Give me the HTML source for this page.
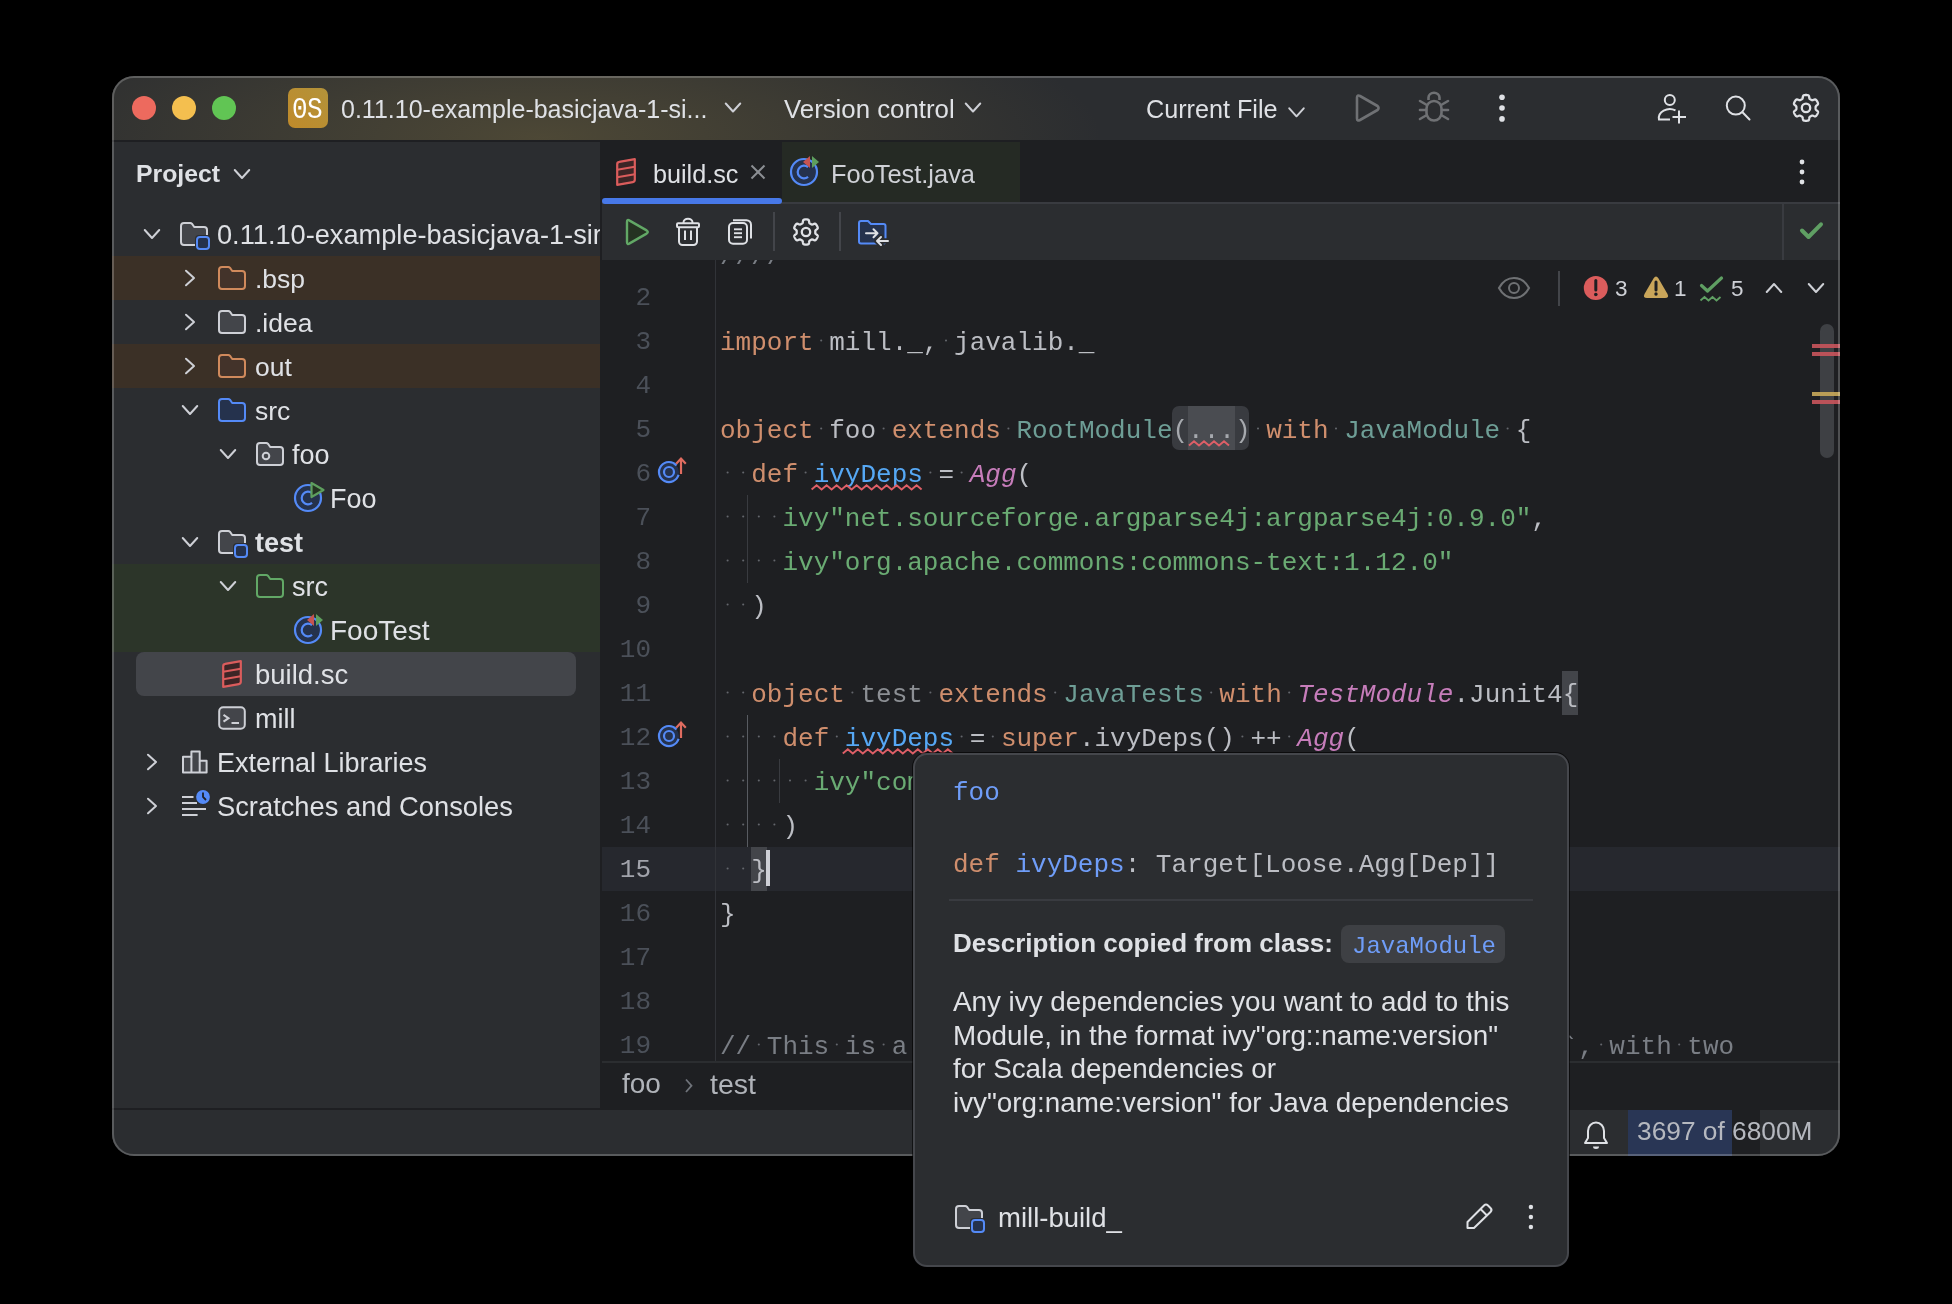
<!DOCTYPE html>
<html><head><meta charset="utf-8"><style>
html,body{margin:0;padding:0;background:#000;width:1952px;height:1304px;overflow:hidden;}
</style></head><body>
<div id="win" style="position:absolute;left:0;top:0;width:1952px;height:1304px;clip-path:inset(76px 112px 148px 112px round 22px);">
<div style="position:absolute;left:112px;top:76px;width:1728px;height:1080px;background:#2b2d30"></div>
<div style="position:absolute;left:112px;top:76px;width:1728px;height:64px;background:radial-gradient(ellipse 560px 150px at 430px 62px, rgba(128,112,62,0.40), rgba(128,112,62,0) 100%),#2b2d30"></div>
<div style="position:absolute;left:112px;top:140px;width:1728px;height:2px;background:#1e1f22"></div>
<div style="position:absolute;left:288px;top:88px;width:40px;height:40px;border-radius:7px;background:linear-gradient(45deg,#c08a2a,#b3933a)"></div>
<div style="position:absolute;will-change:transform;left:292px;top:97.17px;white-space:pre;font-family:'Liberation Mono', monospace;font-size:26px;line-height:31px;color:#ffffff;font-weight:normal;font-style:normal;letter-spacing:-0.6px;transform:scale(1,1.1);transform-origin:0 88%">0S</div>
<div style="position:absolute;will-change:transform;left:341px;top:94.34px;white-space:pre;font-family:'Liberation Sans', sans-serif;font-size:25px;line-height:30px;color:#dfe1e5;font-weight:normal;font-style:normal;">0.11.10-example-basicjava-1-si...</div>
<div style="position:absolute;will-change:transform;left:784px;top:93.56px;white-space:pre;font-family:'Liberation Sans', sans-serif;font-size:25.8px;line-height:31px;color:#dfe1e5;font-weight:normal;font-style:normal;">Version control</div>
<div style="position:absolute;will-change:transform;left:1146px;top:94.27px;white-space:pre;font-family:'Liberation Sans', sans-serif;font-size:25.2px;line-height:30px;color:#dfe1e5;font-weight:normal;font-style:normal;">Current File</div>
<div style="position:absolute;will-change:transform;left:136px;top:158.71px;white-space:pre;font-family:'Liberation Sans', sans-serif;font-size:24.8px;line-height:30px;color:#dfe1e5;font-weight:bold;font-style:normal;">Project</div>
<div style="position:absolute;left:112px;top:256px;width:488px;height:44px;background:#3b3026"></div>
<div style="position:absolute;left:112px;top:344px;width:488px;height:44px;background:#3b3026"></div>
<div style="position:absolute;left:112px;top:564px;width:488px;height:88px;background:#2c3529"></div>
<div style="position:absolute;left:136px;top:652px;width:440px;height:44px;border-radius:8px;background:#43454a"></div>
<div style="position:absolute;will-change:transform;left:217px;top:218.48px;white-space:pre;font-family:'Liberation Sans', sans-serif;font-size:27.2px;line-height:33px;color:#dfe1e5;font-weight:normal;font-style:normal;width:382.5px;overflow:hidden">0.11.10-example-basicjava-1-simple</div>
<div style="position:absolute;will-change:transform;left:255px;top:263.22px;white-space:pre;font-family:'Liberation Sans', sans-serif;font-size:26.5px;line-height:32px;color:#dfe1e5;font-weight:normal;font-style:normal;">.bsp</div>
<div style="position:absolute;will-change:transform;left:255px;top:307.22px;white-space:pre;font-family:'Liberation Sans', sans-serif;font-size:26.5px;line-height:32px;color:#dfe1e5;font-weight:normal;font-style:normal;">.idea</div>
<div style="position:absolute;will-change:transform;left:255px;top:351.22px;white-space:pre;font-family:'Liberation Sans', sans-serif;font-size:26.5px;line-height:32px;color:#dfe1e5;font-weight:normal;font-style:normal;">out</div>
<div style="position:absolute;will-change:transform;left:255px;top:395.22px;white-space:pre;font-family:'Liberation Sans', sans-serif;font-size:26.5px;line-height:32px;color:#dfe1e5;font-weight:normal;font-style:normal;">src</div>
<div style="position:absolute;will-change:transform;left:292px;top:439.04px;white-space:pre;font-family:'Liberation Sans', sans-serif;font-size:27px;line-height:32px;color:#dfe1e5;font-weight:normal;font-style:normal;">foo</div>
<div style="position:absolute;will-change:transform;left:330px;top:483.04px;white-space:pre;font-family:'Liberation Sans', sans-serif;font-size:27px;line-height:32px;color:#dfe1e5;font-weight:normal;font-style:normal;">Foo</div>
<div style="position:absolute;will-change:transform;left:255px;top:527.04px;white-space:pre;font-family:'Liberation Sans', sans-serif;font-size:27px;line-height:32px;color:#dfe1e5;font-weight:bold;font-style:normal;">test</div>
<div style="position:absolute;will-change:transform;left:292px;top:571.04px;white-space:pre;font-family:'Liberation Sans', sans-serif;font-size:27px;line-height:32px;color:#dfe1e5;font-weight:normal;font-style:normal;">src</div>
<div style="position:absolute;will-change:transform;left:330px;top:613.70px;white-space:pre;font-family:'Liberation Sans', sans-serif;font-size:28px;line-height:34px;color:#dfe1e5;font-weight:normal;font-style:normal;">FooTest</div>
<div style="position:absolute;will-change:transform;left:255px;top:658.37px;white-space:pre;font-family:'Liberation Sans', sans-serif;font-size:27.5px;line-height:33px;color:#dfe1e5;font-weight:normal;font-style:normal;">build.sc</div>
<div style="position:absolute;will-change:transform;left:255px;top:703.04px;white-space:pre;font-family:'Liberation Sans', sans-serif;font-size:27px;line-height:32px;color:#dfe1e5;font-weight:normal;font-style:normal;">mill</div>
<div style="position:absolute;will-change:transform;left:217px;top:747.04px;white-space:pre;font-family:'Liberation Sans', sans-serif;font-size:27px;line-height:32px;color:#dfe1e5;font-weight:normal;font-style:normal;">External Libraries</div>
<div style="position:absolute;will-change:transform;left:217px;top:790.44px;white-space:pre;font-family:'Liberation Sans', sans-serif;font-size:27.3px;line-height:33px;color:#dfe1e5;font-weight:normal;font-style:normal;">Scratches and Consoles</div>
<div style="position:absolute;left:600px;top:142px;width:2px;height:966px;background:#1e1f22"></div>
<div style="position:absolute;left:602px;top:142px;width:1238px;height:60px;background:#1e1f22"></div>
<div style="position:absolute;left:782px;top:142px;width:238px;height:60px;background:#252a24"></div>
<div style="position:absolute;left:602px;top:202px;width:1238px;height:2px;background:#393b40"></div>
<div style="position:absolute;left:602px;top:198px;width:180px;height:6px;border-radius:3px;background:#4778e8"></div>
<div style="position:absolute;will-change:transform;left:653px;top:158.57px;white-space:pre;font-family:'Liberation Sans', sans-serif;font-size:25.2px;line-height:30px;color:#dfe1e5;font-weight:normal;font-style:normal;">build.sc</div>
<div style="position:absolute;will-change:transform;left:831px;top:158.50px;white-space:pre;font-family:'Liberation Sans', sans-serif;font-size:25.4px;line-height:30px;color:#cfd1d6;font-weight:normal;font-style:normal;">FooTest.java</div>
<div style="position:absolute;left:602px;top:204px;width:1238px;height:56px;background:#2b2d30"></div>
<div style="position:absolute;left:1782px;top:204px;width:2px;height:56px;background:#393b40"></div>
<div style="position:absolute;left:773px;top:212px;width:2px;height:39px;background:#43454a"></div>
<div style="position:absolute;left:839px;top:212px;width:2px;height:39px;background:#43454a"></div>
<div style="position:absolute;left:602px;top:260px;width:1238px;height:802px;background:#1e1f22"></div>
<div style="position:absolute;left:602px;top:847px;width:1238px;height:44px;background:#26282e"></div>
<div style="position:absolute;left:714.5px;top:260px;width:1.6px;height:802px;background:#313338"></div>
<div style="position:absolute;left:746.5px;top:495px;width:1.6px;height:88px;background:#393b40"></div>
<div style="position:absolute;left:746.5px;top:715px;width:1.8px;height:132px;background:#585b61"></div>
<div style="position:absolute;left:778.5px;top:759px;width:1.6px;height:44px;background:#393b40"></div>
<div style="position:absolute;left:750.7px;top:847px;width:16px;height:44px;background:#43454a"></div>
<div style="position:absolute;left:1562.4px;top:671px;width:16px;height:44px;background:#43454a"></div>
<div style="position:absolute;left:1172.4px;top:406.3px;width:77px;height:43.5px;border-radius:7px;background:#393b40"></div>
<div style="position:absolute;left:1188.0px;top:406.3px;width:46.8px;height:43.5px;background:#4a4c51"></div>
<div style="position:absolute;left:0;top:0;width:1952px;height:1304px;clip-path:inset(260px 0 242px 0)">
<div style="position:absolute;will-change:transform;left:720px;top:242.21px;white-space:pre;font-family:'Liberation Mono', monospace;font-size:26px;line-height:31px;color:#bcbec4;font-weight:normal;font-style:normal;"><span style="color:#7a7e85;">////</span></div>
<div style="position:absolute;will-change:transform;left:720px;top:327.57px;white-space:pre;font-family:'Liberation Mono', monospace;font-size:26px;line-height:31px;color:#bcbec4;font-weight:normal;font-style:normal;"><span style="color:#cf8e6d;">import</span><span style="color:#bcbec4;"> mill._, javalib._</span></div>
<div style="position:absolute;will-change:transform;left:720px;top:415.57px;white-space:pre;font-family:'Liberation Mono', monospace;font-size:26px;line-height:31px;color:#bcbec4;font-weight:normal;font-style:normal;"><span style="color:#cf8e6d;">object</span><span style="color:#bcbec4;"> foo </span><span style="color:#cf8e6d;">extends</span><span style="color:#bcbec4;"> </span><span style="color:#6e9e96;">RootModule</span><span style="color:#a6a9ae;">(</span><span style="color:#a6a9ae;">...</span><span style="color:#a6a9ae;">)</span><span style="color:#bcbec4;"> </span><span style="color:#cf8e6d;">with</span><span style="color:#bcbec4;"> </span><span style="color:#6e9e96;">JavaModule</span><span style="color:#bcbec4;"> {</span></div>
<div style="position:absolute;will-change:transform;left:720px;top:459.57px;white-space:pre;font-family:'Liberation Mono', monospace;font-size:26px;line-height:31px;color:#bcbec4;font-weight:normal;font-style:normal;"><span style="color:#bcbec4;">  </span><span style="color:#cf8e6d;">def</span><span style="color:#bcbec4;"> </span><span style="color:#56a8f5;">ivyDeps</span><span style="color:#bcbec4;"> = </span><span style="color:#c77dbb;font-style:italic;">Agg</span><span style="color:#bcbec4;">(</span></div>
<div style="position:absolute;will-change:transform;left:720px;top:503.57px;white-space:pre;font-family:'Liberation Mono', monospace;font-size:26px;line-height:31px;color:#bcbec4;font-weight:normal;font-style:normal;"><span style="color:#bcbec4;">    </span><span style="color:#6aab73;">ivy"net.sourceforge.argparse4j:argparse4j:0.9.0"</span><span style="color:#bcbec4;">,</span></div>
<div style="position:absolute;will-change:transform;left:720px;top:547.57px;white-space:pre;font-family:'Liberation Mono', monospace;font-size:26px;line-height:31px;color:#bcbec4;font-weight:normal;font-style:normal;"><span style="color:#bcbec4;">    </span><span style="color:#6aab73;">ivy"org.apache.commons:commons-text:1.12.0"</span></div>
<div style="position:absolute;will-change:transform;left:720px;top:591.57px;white-space:pre;font-family:'Liberation Mono', monospace;font-size:26px;line-height:31px;color:#bcbec4;font-weight:normal;font-style:normal;"><span style="color:#bcbec4;">  )</span></div>
<div style="position:absolute;will-change:transform;left:720px;top:679.57px;white-space:pre;font-family:'Liberation Mono', monospace;font-size:26px;line-height:31px;color:#bcbec4;font-weight:normal;font-style:normal;"><span style="color:#bcbec4;">  </span><span style="color:#cf8e6d;">object</span><span style="color:#bcbec4;"> </span><span style="color:#8c8f94;">test</span><span style="color:#bcbec4;"> </span><span style="color:#cf8e6d;">extends</span><span style="color:#bcbec4;"> </span><span style="color:#6e9e96;">JavaTests</span><span style="color:#bcbec4;"> </span><span style="color:#cf8e6d;">with</span><span style="color:#bcbec4;"> </span><span style="color:#c77dbb;font-style:italic;">TestModule</span><span style="color:#bcbec4;">.Junit4{</span></div>
<div style="position:absolute;will-change:transform;left:720px;top:723.57px;white-space:pre;font-family:'Liberation Mono', monospace;font-size:26px;line-height:31px;color:#bcbec4;font-weight:normal;font-style:normal;"><span style="color:#bcbec4;">    </span><span style="color:#cf8e6d;">def</span><span style="color:#bcbec4;"> </span><span style="color:#56a8f5;">ivyDeps</span><span style="color:#bcbec4;"> = </span><span style="color:#cf8e6d;">super</span><span style="color:#bcbec4;">.ivyDeps() ++ </span><span style="color:#c77dbb;font-style:italic;">Agg</span><span style="color:#bcbec4;">(</span></div>
<div style="position:absolute;will-change:transform;left:720px;top:767.57px;white-space:pre;font-family:'Liberation Mono', monospace;font-size:26px;line-height:31px;color:#bcbec4;font-weight:normal;font-style:normal;"><span style="color:#bcbec4;">      </span><span style="color:#6aab73;">ivy"com.novocode:junit-interface:0.11"</span></div>
<div style="position:absolute;will-change:transform;left:720px;top:811.57px;white-space:pre;font-family:'Liberation Mono', monospace;font-size:26px;line-height:31px;color:#bcbec4;font-weight:normal;font-style:normal;"><span style="color:#bcbec4;">    )</span></div>
<div style="position:absolute;will-change:transform;left:720px;top:855.57px;white-space:pre;font-family:'Liberation Mono', monospace;font-size:26px;line-height:31px;color:#bcbec4;font-weight:normal;font-style:normal;"><span style="color:#bcbec4;">  }</span></div>
<div style="position:absolute;will-change:transform;left:720px;top:899.57px;white-space:pre;font-family:'Liberation Mono', monospace;font-size:26px;line-height:31px;color:#bcbec4;font-weight:normal;font-style:normal;"><span style="color:#bcbec4;">}</span></div>
<div style="position:absolute;will-change:transform;left:720px;top:1031.57px;white-space:pre;font-family:'Liberation Mono', monospace;font-size:26px;line-height:31px;color:#bcbec4;font-weight:normal;font-style:normal;"><span style="color:#7a7e85;">// This is a basic Mill build for a single `JavaModule`, with two</span></div>
</div>
<div style="position:absolute;left:766px;top:850px;width:4px;height:36px;background:#ced0d6"></div>
<div style="position:absolute;will-change:transform;left:580px;width:71px;text-align:right;top:284.3px;font-family:'Liberation Mono', monospace;font-size:26px;line-height:29.5px;color:#4b5059;white-space:pre">2</div>
<div style="position:absolute;will-change:transform;left:580px;width:71px;text-align:right;top:328.3px;font-family:'Liberation Mono', monospace;font-size:26px;line-height:29.5px;color:#4b5059;white-space:pre">3</div>
<div style="position:absolute;will-change:transform;left:580px;width:71px;text-align:right;top:372.3px;font-family:'Liberation Mono', monospace;font-size:26px;line-height:29.5px;color:#4b5059;white-space:pre">4</div>
<div style="position:absolute;will-change:transform;left:580px;width:71px;text-align:right;top:416.3px;font-family:'Liberation Mono', monospace;font-size:26px;line-height:29.5px;color:#4b5059;white-space:pre">5</div>
<div style="position:absolute;will-change:transform;left:580px;width:71px;text-align:right;top:460.3px;font-family:'Liberation Mono', monospace;font-size:26px;line-height:29.5px;color:#4b5059;white-space:pre">6</div>
<div style="position:absolute;will-change:transform;left:580px;width:71px;text-align:right;top:504.3px;font-family:'Liberation Mono', monospace;font-size:26px;line-height:29.5px;color:#4b5059;white-space:pre">7</div>
<div style="position:absolute;will-change:transform;left:580px;width:71px;text-align:right;top:548.3px;font-family:'Liberation Mono', monospace;font-size:26px;line-height:29.5px;color:#4b5059;white-space:pre">8</div>
<div style="position:absolute;will-change:transform;left:580px;width:71px;text-align:right;top:592.3px;font-family:'Liberation Mono', monospace;font-size:26px;line-height:29.5px;color:#4b5059;white-space:pre">9</div>
<div style="position:absolute;will-change:transform;left:580px;width:71px;text-align:right;top:636.3px;font-family:'Liberation Mono', monospace;font-size:26px;line-height:29.5px;color:#4b5059;white-space:pre">10</div>
<div style="position:absolute;will-change:transform;left:580px;width:71px;text-align:right;top:680.3px;font-family:'Liberation Mono', monospace;font-size:26px;line-height:29.5px;color:#4b5059;white-space:pre">11</div>
<div style="position:absolute;will-change:transform;left:580px;width:71px;text-align:right;top:724.3px;font-family:'Liberation Mono', monospace;font-size:26px;line-height:29.5px;color:#4b5059;white-space:pre">12</div>
<div style="position:absolute;will-change:transform;left:580px;width:71px;text-align:right;top:768.3px;font-family:'Liberation Mono', monospace;font-size:26px;line-height:29.5px;color:#4b5059;white-space:pre">13</div>
<div style="position:absolute;will-change:transform;left:580px;width:71px;text-align:right;top:812.3px;font-family:'Liberation Mono', monospace;font-size:26px;line-height:29.5px;color:#4b5059;white-space:pre">14</div>
<div style="position:absolute;will-change:transform;left:580px;width:71px;text-align:right;top:856.3px;font-family:'Liberation Mono', monospace;font-size:26px;line-height:29.5px;color:#a1a3ab;white-space:pre">15</div>
<div style="position:absolute;will-change:transform;left:580px;width:71px;text-align:right;top:900.3px;font-family:'Liberation Mono', monospace;font-size:26px;line-height:29.5px;color:#4b5059;white-space:pre">16</div>
<div style="position:absolute;will-change:transform;left:580px;width:71px;text-align:right;top:944.3px;font-family:'Liberation Mono', monospace;font-size:26px;line-height:29.5px;color:#4b5059;white-space:pre">17</div>
<div style="position:absolute;will-change:transform;left:580px;width:71px;text-align:right;top:988.3px;font-family:'Liberation Mono', monospace;font-size:26px;line-height:29.5px;color:#4b5059;white-space:pre">18</div>
<div style="position:absolute;will-change:transform;left:580px;width:71px;text-align:right;top:1032.3px;font-family:'Liberation Mono', monospace;font-size:26px;line-height:29.5px;color:#4b5059;white-space:pre">19</div>
<div style="position:absolute;left:1558px;top:270.5px;width:2px;height:35px;background:#43454a"></div>
<div style="position:absolute;will-change:transform;left:1614.5px;top:275.20px;white-space:pre;font-family:'Liberation Sans', sans-serif;font-size:22.5px;line-height:27px;color:#ced0d6;font-weight:normal;font-style:normal;">3</div>
<div style="position:absolute;will-change:transform;left:1673.5px;top:275.20px;white-space:pre;font-family:'Liberation Sans', sans-serif;font-size:22.5px;line-height:27px;color:#ced0d6;font-weight:normal;font-style:normal;">1</div>
<div style="position:absolute;will-change:transform;left:1730.5px;top:275.20px;white-space:pre;font-family:'Liberation Sans', sans-serif;font-size:22.5px;line-height:27px;color:#ced0d6;font-weight:normal;font-style:normal;">5</div>
<div style="position:absolute;left:1820px;top:324px;width:14px;height:134px;border-radius:7px;background:#3e4044"></div>
<div style="position:absolute;left:1812px;top:344px;width:28px;height:4px;background:#c9545c;opacity:0.9"></div>
<div style="position:absolute;left:1812px;top:352px;width:28px;height:4px;background:#c9545c;opacity:0.9"></div>
<div style="position:absolute;left:1812px;top:392px;width:28px;height:4px;background:#c8a95a;opacity:0.9"></div>
<div style="position:absolute;left:1812px;top:400px;width:28px;height:4px;background:#c9545c;opacity:0.9"></div>
<div style="position:absolute;left:602px;top:1061px;width:1238px;height:2px;background:#2b2d30"></div>
<div style="position:absolute;left:602px;top:1063px;width:1238px;height:45px;background:#1e1f22"></div>
<div style="position:absolute;will-change:transform;left:622px;top:1066.80px;white-space:pre;font-family:'Liberation Sans', sans-serif;font-size:28px;line-height:34px;color:#b0b3b9;font-weight:normal;font-style:normal;">foo</div>
<div style="position:absolute;will-change:transform;left:710px;top:1066.62px;white-space:pre;font-family:'Liberation Sans', sans-serif;font-size:28.5px;line-height:34px;color:#b0b3b9;font-weight:normal;font-style:normal;">test</div>
<div style="position:absolute;left:112px;top:1108px;width:1728px;height:2px;background:#1e1f22"></div>
<div style="position:absolute;left:112px;top:1110px;width:1728px;height:46px;background:#2b2d30"></div>
<div style="position:absolute;left:1628px;top:1110px;width:104px;height:46px;background:#293655"></div>
<div style="position:absolute;left:1732px;top:1110px;width:28px;height:46px;background:#1e1f22"></div>
<div style="position:absolute;will-change:transform;left:1637px;top:1114.89px;white-space:pre;font-family:'Liberation Sans', sans-serif;font-size:26.3px;line-height:32px;color:#b5b8bf;font-weight:normal;font-style:normal;">3697 of 6800M</div>
</div>
<svg style="position:absolute;left:0;top:0" width="1952" height="1304" viewBox="0 0 1952 1304"><circle cx="144" cy="108" r="12" fill="#ed6a5e"/><circle cx="184" cy="108" r="12" fill="#f4bf4f"/><circle cx="224" cy="108" r="12" fill="#61c554"/><polyline points="725.75,103.5 733,111.5 740.25,103.5" fill="none" stroke="#ced0d6" stroke-width="2" stroke-linecap="round" stroke-linejoin="round"/><polyline points="965.75,103.5 973,111.5 980.25,103.5" fill="none" stroke="#ced0d6" stroke-width="2" stroke-linecap="round" stroke-linejoin="round"/><polyline points="1289.25,108.3 1296.5,116.3 1303.75,108.3" fill="none" stroke="#ced0d6" stroke-width="2" stroke-linecap="round" stroke-linejoin="round"/><path d="M1357,97.5 Q1357,94.5 1360,96 L1377.5,106 Q1379.5,108 1377.5,110 L1360,120 Q1357,121.5 1357,118.5 Z" fill="none" stroke="#6f7174" stroke-width="2.6" stroke-linejoin="round"/><path d="M1428.5,100 V97.5 A5.5,4.8 0 0 1 1439.5,97.5 V100" fill="none" stroke="#6f7174" stroke-width="2.6"/><rect x="1426.5" y="101" width="15" height="19.5" rx="7.5" fill="none" stroke="#6f7174" stroke-width="2.6"/><line x1="1420" y1="101" x2="1426" y2="104.5" stroke="#6f7174" stroke-width="2.6" stroke-linecap="round"/><line x1="1420" y1="110" x2="1426" y2="110" stroke="#6f7174" stroke-width="2.6" stroke-linecap="round"/><line x1="1420" y1="119" x2="1426" y2="115.5" stroke="#6f7174" stroke-width="2.6" stroke-linecap="round"/><line x1="1448" y1="101" x2="1442" y2="104.5" stroke="#6f7174" stroke-width="2.6" stroke-linecap="round"/><line x1="1448" y1="110" x2="1442" y2="110" stroke="#6f7174" stroke-width="2.6" stroke-linecap="round"/><line x1="1448" y1="119" x2="1442" y2="115.5" stroke="#6f7174" stroke-width="2.6" stroke-linecap="round"/><circle cx="1502" cy="97.3" r="2.8" fill="#dfe1e5"/><circle cx="1502" cy="108" r="2.8" fill="#dfe1e5"/><circle cx="1502" cy="118.9" r="2.8" fill="#dfe1e5"/><circle cx="1669.8" cy="100" r="5" fill="none" stroke="#dfe1e5" stroke-width="2"/><path d="M1670,119.5 H1659 A11,9 0 0 1 1675.5,110.3" fill="none" stroke="#dfe1e5" stroke-width="2"/><line x1="1679" y1="110.5" x2="1679" y2="123.5" stroke="#dfe1e5" stroke-width="2"/><line x1="1672.5" y1="117" x2="1686" y2="117" stroke="#dfe1e5" stroke-width="2"/><circle cx="1735.8" cy="105.6" r="9" fill="none" stroke="#dfe1e5" stroke-width="2"/><line x1="1742.5" y1="112.3" x2="1749.5" y2="119.5" stroke="#dfe1e5" stroke-width="2" stroke-linecap="round"/><polygon points="1815.60,107.90 1815.60,108.15 1815.60,108.40 1815.60,108.66 1815.61,108.91 1815.65,109.17 1815.75,109.44 1815.96,109.75 1816.35,110.10 1816.90,110.52 1817.45,110.97 1817.83,111.41 1818.01,111.80 1818.04,112.16 1817.99,112.50 1817.89,112.83 1817.77,113.14 1817.64,113.45 1817.49,113.76 1817.34,114.06 1817.17,114.35 1817.00,114.64 1816.82,114.92 1816.63,115.20 1816.42,115.47 1816.21,115.73 1815.98,115.98 1815.71,116.19 1815.38,116.35 1814.95,116.40 1814.38,116.28 1813.71,116.03 1813.08,115.76 1812.58,115.60 1812.21,115.57 1811.93,115.62 1811.68,115.72 1811.45,115.84 1811.23,115.96 1811.02,116.09 1810.80,116.21 1810.58,116.34 1810.36,116.46 1810.15,116.59 1809.93,116.73 1809.73,116.89 1809.54,117.12 1809.38,117.45 1809.27,117.96 1809.18,118.64 1809.07,119.35 1808.88,119.90 1808.63,120.25 1808.33,120.46 1808.01,120.58 1807.68,120.66 1807.35,120.72 1807.01,120.75 1806.68,120.78 1806.34,120.80 1806.00,120.80 1805.66,120.80 1805.32,120.78 1804.99,120.75 1804.65,120.72 1804.32,120.66 1803.99,120.58 1803.67,120.46 1803.37,120.25 1803.12,119.90 1802.93,119.35 1802.82,118.64 1802.73,117.96 1802.62,117.45 1802.46,117.12 1802.27,116.89 1802.07,116.73 1801.85,116.59 1801.64,116.46 1801.42,116.34 1801.20,116.21 1800.98,116.09 1800.77,115.96 1800.55,115.84 1800.32,115.72 1800.07,115.62 1799.79,115.57 1799.42,115.60 1798.92,115.76 1798.29,116.03 1797.62,116.28 1797.05,116.40 1796.62,116.35 1796.29,116.19 1796.02,115.98 1795.79,115.73 1795.58,115.47 1795.37,115.20 1795.18,114.92 1795.00,114.64 1794.83,114.35 1794.66,114.06 1794.51,113.76 1794.36,113.45 1794.23,113.14 1794.11,112.83 1794.01,112.50 1793.96,112.16 1793.99,111.80 1794.17,111.41 1794.55,110.97 1795.10,110.52 1795.65,110.10 1796.04,109.75 1796.25,109.44 1796.35,109.17 1796.39,108.91 1796.40,108.66 1796.40,108.40 1796.40,108.15 1796.40,107.90 1796.40,107.65 1796.40,107.40 1796.40,107.14 1796.39,106.89 1796.35,106.63 1796.25,106.36 1796.04,106.05 1795.65,105.70 1795.10,105.28 1794.55,104.83 1794.17,104.39 1793.99,104.00 1793.96,103.64 1794.01,103.30 1794.11,102.97 1794.23,102.66 1794.36,102.35 1794.51,102.04 1794.66,101.74 1794.83,101.45 1795.00,101.16 1795.18,100.88 1795.37,100.60 1795.58,100.33 1795.79,100.07 1796.02,99.82 1796.29,99.61 1796.62,99.45 1797.05,99.40 1797.62,99.52 1798.29,99.77 1798.92,100.04 1799.42,100.20 1799.79,100.23 1800.07,100.18 1800.32,100.08 1800.55,99.96 1800.77,99.84 1800.98,99.71 1801.20,99.59 1801.42,99.46 1801.64,99.34 1801.85,99.21 1802.07,99.07 1802.27,98.91 1802.46,98.68 1802.62,98.35 1802.73,97.84 1802.82,97.16 1802.93,96.45 1803.12,95.90 1803.37,95.55 1803.67,95.34 1803.99,95.22 1804.32,95.14 1804.65,95.08 1804.99,95.05 1805.32,95.02 1805.66,95.00 1806.00,95.00 1806.34,95.00 1806.68,95.02 1807.01,95.05 1807.35,95.08 1807.68,95.14 1808.01,95.22 1808.33,95.34 1808.63,95.55 1808.88,95.90 1809.07,96.45 1809.18,97.16 1809.27,97.84 1809.38,98.35 1809.54,98.68 1809.73,98.91 1809.93,99.07 1810.15,99.21 1810.36,99.34 1810.58,99.46 1810.80,99.59 1811.02,99.71 1811.23,99.84 1811.45,99.96 1811.68,100.08 1811.93,100.18 1812.21,100.23 1812.58,100.20 1813.08,100.04 1813.71,99.77 1814.38,99.52 1814.95,99.40 1815.38,99.45 1815.71,99.61 1815.98,99.82 1816.21,100.07 1816.42,100.33 1816.63,100.60 1816.82,100.88 1817.00,101.16 1817.17,101.45 1817.34,101.74 1817.49,102.04 1817.64,102.35 1817.77,102.66 1817.89,102.97 1817.99,103.30 1818.04,103.64 1818.01,104.00 1817.83,104.39 1817.45,104.83 1816.90,105.28 1816.35,105.70 1815.96,106.05 1815.75,106.36 1815.65,106.63 1815.61,106.89 1815.60,107.14 1815.60,107.40 1815.60,107.65" fill="none" stroke="#dfe1e5" stroke-width="2.3" stroke-linejoin="round"/><circle cx="1806" cy="107.9" r="4.2" fill="none" stroke="#dfe1e5" stroke-width="2.3"/><polyline points="234.75,170.0 242,178.0 249.25,170.0" fill="none" stroke="#ced0d6" stroke-width="2" stroke-linecap="round" stroke-linejoin="round"/><polyline points="144.75,230.0 152,238.0 159.25,230.0" fill="none" stroke="#ced0d6" stroke-width="2" stroke-linecap="round" stroke-linejoin="round"/><path d="M184.0,223.0 H190.2 Q191.2,223.0 192.2,224.0 L194.2,227 H204.0 Q207.0,227 207.0,230 V242.0 Q207.0,245.0 204.0,245.0 H184.0 Q181.0,245.0 181.0,242.0 V226.0 Q181.0,223.0 184.0,223.0 Z" fill="#43454a" stroke="#ced0d6" stroke-width="2" stroke-linejoin="round"/><rect x="195" y="235" width="16" height="16" rx="4" fill="#2b2d30"/><rect x="197" y="237" width="12" height="12" rx="3" fill="#25324d" stroke="#548af7" stroke-width="2"/><polyline points="186.0,270.75 194.0,278 186.0,285.25" fill="none" stroke="#ced0d6" stroke-width="2" stroke-linecap="round" stroke-linejoin="round"/><path d="M222.0,267.0 H228.2 Q229.2,267.0 230.2,268.0 L232.2,271 H242.0 Q245.0,271 245.0,274 V286.0 Q245.0,289.0 242.0,289.0 H222.0 Q219.0,289.0 219.0,286.0 V270.0 Q219.0,267.0 222.0,267.0 Z" fill="#43332a" stroke="#d08a5c" stroke-width="2" stroke-linejoin="round"/><polyline points="186.0,314.75 194.0,322 186.0,329.25" fill="none" stroke="#ced0d6" stroke-width="2" stroke-linecap="round" stroke-linejoin="round"/><path d="M222.0,311.0 H228.2 Q229.2,311.0 230.2,312.0 L232.2,315 H242.0 Q245.0,315 245.0,318 V330.0 Q245.0,333.0 242.0,333.0 H222.0 Q219.0,333.0 219.0,330.0 V314.0 Q219.0,311.0 222.0,311.0 Z" fill="#43454a" stroke="#ced0d6" stroke-width="2" stroke-linejoin="round"/><polyline points="186.0,358.75 194.0,366 186.0,373.25" fill="none" stroke="#ced0d6" stroke-width="2" stroke-linecap="round" stroke-linejoin="round"/><path d="M222.0,355.0 H228.2 Q229.2,355.0 230.2,356.0 L232.2,359 H242.0 Q245.0,359 245.0,362 V374.0 Q245.0,377.0 242.0,377.0 H222.0 Q219.0,377.0 219.0,374.0 V358.0 Q219.0,355.0 222.0,355.0 Z" fill="#43332a" stroke="#d08a5c" stroke-width="2" stroke-linejoin="round"/><polyline points="182.75,406.0 190,414.0 197.25,406.0" fill="none" stroke="#ced0d6" stroke-width="2" stroke-linecap="round" stroke-linejoin="round"/><path d="M222.0,399.0 H228.2 Q229.2,399.0 230.2,400.0 L232.2,403 H242.0 Q245.0,403 245.0,406 V418.0 Q245.0,421.0 242.0,421.0 H222.0 Q219.0,421.0 219.0,418.0 V402.0 Q219.0,399.0 222.0,399.0 Z" fill="#25324d" stroke="#548af7" stroke-width="2" stroke-linejoin="round"/><polyline points="220.75,450.0 228,458.0 235.25,450.0" fill="none" stroke="#ced0d6" stroke-width="2" stroke-linecap="round" stroke-linejoin="round"/><path d="M260.0,443.0 H266.2 Q267.2,443.0 268.2,444.0 L270.2,447 H280.0 Q283.0,447 283.0,450 V462.0 Q283.0,465.0 280.0,465.0 H260.0 Q257.0,465.0 257.0,462.0 V446.0 Q257.0,443.0 260.0,443.0 Z" fill="#43454a" stroke="#ced0d6" stroke-width="2" stroke-linejoin="round"/><circle cx="266" cy="456" r="3.3" fill="none" stroke="#ced0d6" stroke-width="2"/><circle cx="308" cy="498" r="13" fill="#25324d" stroke="#548af7" stroke-width="2.2"/><path d="M312.05,493.17 A6.3,6.3 0 1 0 312.05,502.83" fill="none" stroke="#548af7" stroke-width="2.2"/><polygon points="311.5,483 323.5,490 311.5,497" fill="#253322" stroke="#5e9f5e" stroke-width="2.2" stroke-linejoin="round"/><polyline points="182.75,538.0 190,546.0 197.25,538.0" fill="none" stroke="#ced0d6" stroke-width="2" stroke-linecap="round" stroke-linejoin="round"/><path d="M222.0,531.0 H228.2 Q229.2,531.0 230.2,532.0 L232.2,535 H242.0 Q245.0,535 245.0,538 V550.0 Q245.0,553.0 242.0,553.0 H222.0 Q219.0,553.0 219.0,550.0 V534.0 Q219.0,531.0 222.0,531.0 Z" fill="#43454a" stroke="#ced0d6" stroke-width="2" stroke-linejoin="round"/><rect x="233" y="543" width="16" height="16" rx="4" fill="#2b2d30"/><rect x="235" y="545" width="12" height="12" rx="3" fill="#25324d" stroke="#548af7" stroke-width="2"/><polyline points="220.75,582.0 228,590.0 235.25,582.0" fill="none" stroke="#ced0d6" stroke-width="2" stroke-linecap="round" stroke-linejoin="round"/><path d="M260.0,575.0 H266.2 Q267.2,575.0 268.2,576.0 L270.2,579 H280.0 Q283.0,579 283.0,582 V594.0 Q283.0,597.0 280.0,597.0 H260.0 Q257.0,597.0 257.0,594.0 V578.0 Q257.0,575.0 260.0,575.0 Z" fill="#2c3529" stroke="#62a866" stroke-width="2" stroke-linejoin="round"/><circle cx="308" cy="630" r="13" fill="#25324d" stroke="#548af7" stroke-width="2.2"/><path d="M312.05,625.17 A6.3,6.3 0 1 0 312.05,634.83" fill="none" stroke="#548af7" stroke-width="2.2"/><polygon points="307,620 314,614 314,626" fill="#c75450"/><polygon points="316,614 323,620 316,626" fill="#5e9f5e"/><path d="M223.2,666.2 Q223.2,664.2 225.2,663.9000000000001 L240.8,661.2 V681.8 Q240.8,683.8 238.8,684.0999999999999 L223.2,686.8 Z" fill="#3c2526" stroke="#db5c5c" stroke-width="2.2" stroke-linejoin="round"/><line x1="223.2" y1="671.73" x2="240.8" y2="668.73" stroke="#db5c5c" stroke-width="2.2"/><line x1="223.2" y1="679.27" x2="240.8" y2="676.27" stroke="#db5c5c" stroke-width="2.2"/><rect x="219.2" y="707.2" width="25.6" height="21.6" rx="4" fill="#43454a" stroke="#ced0d6" stroke-width="2"/><polyline points="223.5,714.8 228.5,718.2 223.5,721.6" fill="none" stroke="#ced0d6" stroke-width="2"/><line x1="231.5" y1="723" x2="239" y2="723" stroke="#ced0d6" stroke-width="2"/><polyline points="148.0,754.75 156.0,762 148.0,769.25" fill="none" stroke="#ced0d6" stroke-width="2" stroke-linecap="round" stroke-linejoin="round"/><path d="M183,772.6 V756.7 H191.4 V751.6 H199.7 V760.8 H206.6 V772.6 Z" fill="#43454a" stroke="#ced0d6" stroke-width="2" stroke-linejoin="round"/><line x1="191.4" y1="756.7" x2="191.4" y2="772.6" stroke="#ced0d6" stroke-width="2"/><line x1="199.7" y1="760.8" x2="199.7" y2="772.6" stroke="#ced0d6" stroke-width="2"/><polyline points="148.0,798.75 156.0,806 148.0,813.25" fill="none" stroke="#ced0d6" stroke-width="2" stroke-linecap="round" stroke-linejoin="round"/><line x1="182" y1="797" x2="193.5" y2="797" stroke="#ced0d6" stroke-width="2"/><line x1="182" y1="803" x2="197" y2="803" stroke="#ced0d6" stroke-width="2"/><line x1="182" y1="809" x2="206" y2="809" stroke="#ced0d6" stroke-width="2"/><line x1="182" y1="815" x2="197.6" y2="815" stroke="#ced0d6" stroke-width="2"/><circle cx="203" cy="797" r="8.2" fill="#2b2d30"/><circle cx="203" cy="797" r="6.9" fill="#548af7"/><polyline points="203,792.5 203,797 206,800" fill="none" stroke="#1e1f22" stroke-width="1.8"/><path d="M617.2,164.2 Q617.2,162.2 619.2,161.89999999999998 L634.8,159.2 V179.8 Q634.8,181.8 632.8,182.10000000000002 L617.2,184.8 Z" fill="#3c2526" stroke="#db5c5c" stroke-width="2.2" stroke-linejoin="round"/><line x1="617.2" y1="169.73" x2="634.8" y2="166.73" stroke="#db5c5c" stroke-width="2.2"/><line x1="617.2" y1="177.27" x2="634.8" y2="174.27" stroke="#db5c5c" stroke-width="2.2"/><line x1="751.5" y1="165.5" x2="764.5" y2="178.5" stroke="#8c8f94" stroke-width="2"/><line x1="764.5" y1="165.5" x2="751.5" y2="178.5" stroke="#8c8f94" stroke-width="2"/><circle cx="804" cy="172" r="13" fill="#25324d" stroke="#548af7" stroke-width="2.2"/><path d="M808.05,167.17 A6.3,6.3 0 1 0 808.05,176.83" fill="none" stroke="#548af7" stroke-width="2.2"/><polygon points="803,162 810,156 810,168" fill="#c75450"/><polygon points="812,156 819,162 812,168" fill="#5e9f5e"/><circle cx="1802" cy="162" r="2.4" fill="#dfe1e5"/><circle cx="1802" cy="172" r="2.4" fill="#dfe1e5"/><circle cx="1802" cy="182" r="2.4" fill="#dfe1e5"/><path d="M627,222 Q627,219 629.6,220.6 L646.6,230.4 Q649,232 646.6,233.6 L629.6,243.4 Q627,245 627,242 Z" fill="#253322" stroke="#62a866" stroke-width="2.4" stroke-linejoin="round"/><rect x="677" y="223.3" width="22" height="4" rx="1" fill="none" stroke="#dfe1e5" stroke-width="2"/><path d="M683.5,223.3 V222.5 A4.5,3.8 0 0 1 692.5,222.5 V223.3" fill="none" stroke="#dfe1e5" stroke-width="2"/><path d="M679,227.5 V241.5 A3.5,3.5 0 0 0 682.5,245 H693.5 A3.5,3.5 0 0 0 697,241.5 V227.5" fill="none" stroke="#dfe1e5" stroke-width="2"/><line x1="685" y1="230.5" x2="685" y2="240" stroke="#dfe1e5" stroke-width="2"/><line x1="691" y1="230.5" x2="691" y2="240" stroke="#dfe1e5" stroke-width="2"/><path d="M733,220.2 H746.5 A4.5,4.5 0 0 1 751,224.7 V238.5" fill="none" stroke="#dfe1e5" stroke-width="2"/><rect x="729" y="223" width="18" height="20.8" rx="4" fill="#2b2d30" stroke="#dfe1e5" stroke-width="2"/><line x1="734" y1="229.3" x2="742" y2="229.3" stroke="#dfe1e5" stroke-width="1.9"/><line x1="734" y1="233.2" x2="742" y2="233.2" stroke="#dfe1e5" stroke-width="1.9"/><line x1="734" y1="237.2" x2="742" y2="237.2" stroke="#dfe1e5" stroke-width="1.9"/><polygon points="815.30,232.00 815.30,232.24 815.30,232.49 815.30,232.73 815.31,232.98 815.35,233.23 815.45,233.50 815.67,233.79 816.05,234.14 816.60,234.55 817.16,234.99 817.55,235.42 817.72,235.81 817.75,236.16 817.70,236.49 817.61,236.81 817.50,237.12 817.37,237.42 817.22,237.72 817.07,238.01 816.91,238.30 816.74,238.58 816.57,238.86 816.38,239.13 816.18,239.40 815.97,239.65 815.74,239.89 815.48,240.10 815.16,240.25 814.74,240.29 814.17,240.17 813.51,239.91 812.88,239.64 812.39,239.48 812.02,239.44 811.74,239.49 811.50,239.58 811.28,239.69 811.07,239.81 810.86,239.93 810.65,240.05 810.44,240.18 810.23,240.30 810.02,240.42 809.81,240.56 809.61,240.72 809.43,240.94 809.28,241.27 809.18,241.78 809.10,242.46 808.99,243.16 808.81,243.71 808.56,244.06 808.27,244.26 807.96,244.38 807.64,244.46 807.32,244.52 806.99,244.55 806.66,244.58 806.33,244.60 806.00,244.60 805.67,244.60 805.34,244.58 805.01,244.55 804.68,244.52 804.36,244.46 804.04,244.38 803.73,244.26 803.44,244.06 803.19,243.71 803.01,243.16 802.90,242.46 802.82,241.78 802.72,241.27 802.57,240.94 802.39,240.72 802.19,240.56 801.98,240.42 801.77,240.30 801.56,240.18 801.35,240.05 801.14,239.93 800.93,239.81 800.72,239.69 800.50,239.58 800.26,239.49 799.98,239.44 799.61,239.48 799.12,239.64 798.49,239.91 797.83,240.17 797.26,240.29 796.84,240.25 796.52,240.10 796.26,239.89 796.03,239.65 795.82,239.40 795.62,239.13 795.43,238.86 795.26,238.58 795.09,238.30 794.93,238.01 794.78,237.72 794.63,237.42 794.50,237.12 794.39,236.81 794.30,236.49 794.25,236.16 794.28,235.81 794.45,235.42 794.84,234.99 795.40,234.55 795.95,234.14 796.33,233.79 796.55,233.50 796.65,233.23 796.69,232.98 796.70,232.73 796.70,232.49 796.70,232.24 796.70,232.00 796.70,231.76 796.70,231.51 796.70,231.27 796.69,231.02 796.65,230.77 796.55,230.50 796.33,230.21 795.95,229.86 795.40,229.45 794.84,229.01 794.45,228.58 794.28,228.19 794.25,227.84 794.30,227.51 794.39,227.19 794.50,226.88 794.63,226.58 794.78,226.28 794.93,225.99 795.09,225.70 795.26,225.42 795.43,225.14 795.62,224.87 795.82,224.60 796.03,224.35 796.26,224.11 796.52,223.90 796.84,223.75 797.26,223.71 797.83,223.83 798.49,224.09 799.12,224.36 799.61,224.52 799.98,224.56 800.26,224.51 800.50,224.42 800.72,224.31 800.93,224.19 801.14,224.07 801.35,223.95 801.56,223.82 801.77,223.70 801.98,223.58 802.19,223.44 802.39,223.28 802.57,223.06 802.72,222.73 802.82,222.22 802.90,221.54 803.01,220.84 803.19,220.29 803.44,219.94 803.73,219.74 804.04,219.62 804.36,219.54 804.68,219.48 805.01,219.45 805.34,219.42 805.67,219.40 806.00,219.40 806.33,219.40 806.66,219.42 806.99,219.45 807.32,219.48 807.64,219.54 807.96,219.62 808.27,219.74 808.56,219.94 808.81,220.29 808.99,220.84 809.10,221.54 809.18,222.22 809.28,222.73 809.43,223.06 809.61,223.28 809.81,223.44 810.02,223.58 810.23,223.70 810.44,223.82 810.65,223.95 810.86,224.07 811.07,224.19 811.28,224.31 811.50,224.42 811.74,224.51 812.02,224.56 812.39,224.52 812.88,224.36 813.51,224.09 814.17,223.83 814.74,223.71 815.16,223.75 815.48,223.90 815.74,224.11 815.97,224.35 816.18,224.60 816.38,224.87 816.57,225.14 816.74,225.42 816.91,225.70 817.07,225.99 817.22,226.28 817.37,226.58 817.50,226.88 817.61,227.19 817.70,227.51 817.75,227.84 817.72,228.19 817.55,228.58 817.16,229.01 816.60,229.45 816.05,229.86 815.67,230.21 815.45,230.50 815.35,230.77 815.31,231.02 815.30,231.27 815.30,231.51 815.30,231.76" fill="none" stroke="#dfe1e5" stroke-width="2.3" stroke-linejoin="round"/><circle cx="806" cy="232" r="4.2" fill="none" stroke="#dfe1e5" stroke-width="2.3"/><path d="M859,223 Q859,221 861,221 H868 L871,224 H883.5 Q885.5,224 885.5,226 V241.5 Q885.5,243.5 883.5,243.5 H861 Q859,243.5 859,241.5 Z" fill="#25324d" stroke="#548af7" stroke-width="2" stroke-linejoin="round"/><path d="M866,233.3 H877.5 M873.5,229.3 L877.5,233.3 L873.5,237.3" fill="none" stroke="#dfe1e5" stroke-width="2" stroke-linecap="round" stroke-linejoin="round"/><path d="M888,241 H877 M881,237 L877,241 L881,245" fill="none" stroke="#2b2d30" stroke-width="5.5" stroke-linecap="round" stroke-linejoin="round"/><path d="M888,241 H877 M881,237 L877,241 L881,245" fill="none" stroke="#dfe1e5" stroke-width="2" stroke-linecap="round" stroke-linejoin="round"/><polyline points="1802,230.5 1808.5,237 1821,224.3" fill="none" stroke="#5f9f63" stroke-width="4" stroke-linecap="round" stroke-linejoin="round"/><circle cx="821.2" cy="340.5" r="1.05" fill="#63666c"/><circle cx="946.0" cy="340.5" r="1.05" fill="#63666c"/><circle cx="821.2" cy="428.5" r="1.05" fill="#63666c"/><circle cx="883.6" cy="428.5" r="1.05" fill="#63666c"/><circle cx="1008.4" cy="428.5" r="1.05" fill="#63666c"/><circle cx="1258.0" cy="428.5" r="1.05" fill="#63666c"/><circle cx="1336.0" cy="428.5" r="1.05" fill="#63666c"/><circle cx="1507.6" cy="428.5" r="1.05" fill="#63666c"/><circle cx="727.6" cy="472.5" r="1.05" fill="#63666c"/><circle cx="743.2" cy="472.5" r="1.05" fill="#63666c"/><circle cx="805.6" cy="472.5" r="1.05" fill="#63666c"/><circle cx="930.4" cy="472.5" r="1.05" fill="#63666c"/><circle cx="961.6" cy="472.5" r="1.05" fill="#63666c"/><circle cx="727.6" cy="516.5" r="1.05" fill="#63666c"/><circle cx="743.2" cy="516.5" r="1.05" fill="#63666c"/><circle cx="758.8" cy="516.5" r="1.05" fill="#63666c"/><circle cx="774.4" cy="516.5" r="1.05" fill="#63666c"/><circle cx="727.6" cy="560.5" r="1.05" fill="#63666c"/><circle cx="743.2" cy="560.5" r="1.05" fill="#63666c"/><circle cx="758.8" cy="560.5" r="1.05" fill="#63666c"/><circle cx="774.4" cy="560.5" r="1.05" fill="#63666c"/><circle cx="727.6" cy="604.5" r="1.05" fill="#63666c"/><circle cx="743.2" cy="604.5" r="1.05" fill="#63666c"/><circle cx="727.6" cy="692.5" r="1.05" fill="#63666c"/><circle cx="743.2" cy="692.5" r="1.05" fill="#63666c"/><circle cx="852.4" cy="692.5" r="1.05" fill="#63666c"/><circle cx="930.4" cy="692.5" r="1.05" fill="#63666c"/><circle cx="1055.2" cy="692.5" r="1.05" fill="#63666c"/><circle cx="1211.2" cy="692.5" r="1.05" fill="#63666c"/><circle cx="1289.2" cy="692.5" r="1.05" fill="#63666c"/><circle cx="727.6" cy="736.5" r="1.05" fill="#63666c"/><circle cx="743.2" cy="736.5" r="1.05" fill="#63666c"/><circle cx="758.8" cy="736.5" r="1.05" fill="#63666c"/><circle cx="774.4" cy="736.5" r="1.05" fill="#63666c"/><circle cx="836.8" cy="736.5" r="1.05" fill="#63666c"/><circle cx="961.6" cy="736.5" r="1.05" fill="#63666c"/><circle cx="992.8" cy="736.5" r="1.05" fill="#63666c"/><circle cx="1242.4" cy="736.5" r="1.05" fill="#63666c"/><circle cx="1289.2" cy="736.5" r="1.05" fill="#63666c"/><circle cx="727.6" cy="780.5" r="1.05" fill="#63666c"/><circle cx="743.2" cy="780.5" r="1.05" fill="#63666c"/><circle cx="758.8" cy="780.5" r="1.05" fill="#63666c"/><circle cx="774.4" cy="780.5" r="1.05" fill="#63666c"/><circle cx="790.0" cy="780.5" r="1.05" fill="#63666c"/><circle cx="805.6" cy="780.5" r="1.05" fill="#63666c"/><circle cx="727.6" cy="824.5" r="1.05" fill="#63666c"/><circle cx="743.2" cy="824.5" r="1.05" fill="#63666c"/><circle cx="758.8" cy="824.5" r="1.05" fill="#63666c"/><circle cx="774.4" cy="824.5" r="1.05" fill="#63666c"/><circle cx="727.6" cy="868.5" r="1.05" fill="#63666c"/><circle cx="743.2" cy="868.5" r="1.05" fill="#63666c"/><circle cx="758.8" cy="1044.5" r="1.05" fill="#63666c"/><circle cx="836.8" cy="1044.5" r="1.05" fill="#63666c"/><circle cx="883.6" cy="1044.5" r="1.05" fill="#63666c"/><circle cx="914.8" cy="1044.5" r="1.05" fill="#63666c"/><circle cx="1008.4" cy="1044.5" r="1.05" fill="#63666c"/><circle cx="1086.4" cy="1044.5" r="1.05" fill="#63666c"/><circle cx="1180.0" cy="1044.5" r="1.05" fill="#63666c"/><circle cx="1242.4" cy="1044.5" r="1.05" fill="#63666c"/><circle cx="1273.6" cy="1044.5" r="1.05" fill="#63666c"/><circle cx="1382.8" cy="1044.5" r="1.05" fill="#63666c"/><circle cx="1601.2" cy="1044.5" r="1.05" fill="#63666c"/><circle cx="1679.2" cy="1044.5" r="1.05" fill="#63666c"/><polyline points="811.6,489.5 816.6,485.2 821.6,489.5 826.6,485.2 831.6,489.5 836.6,485.2 841.6,489.5 846.6,485.2 851.6,489.5 856.6,485.2 861.6,489.5 866.6,485.2 871.6,489.5 876.6,485.2 881.6,489.5 886.6,485.2 891.6,489.5 896.6,485.2 901.6,489.5 906.6,485.2 911.6,489.5 916.6,485.2 921.6,489.5" fill="none" stroke="#de5f67" stroke-width="1.9" stroke-linejoin="miter"/><polyline points="842.8,753.5 847.8,749.2 852.8,753.5 857.8,749.2 862.8,753.5 867.8,749.2 872.8,753.5 877.8,749.2 882.8,753.5 887.8,749.2 892.8,753.5 897.8,749.2 902.8,753.5 907.8,749.2 912.8,753.5 917.8,749.2 922.8,753.5 927.8,749.2 932.8,753.5 937.8,749.2 942.8,753.5 947.8,749.2 952.8,753.5" fill="none" stroke="#de5f67" stroke-width="1.9" stroke-linejoin="miter"/><polyline points="1189.0,445.5 1194.0,441.2 1199.0,445.5 1204.0,441.2 1209.0,445.5 1214.0,441.2 1219.0,445.5 1224.0,441.2 1229.0,445.5" fill="none" stroke="#de5f67" stroke-width="1.9" stroke-linejoin="miter"/><circle cx="669" cy="472" r="10" fill="#25324d"/><path d="M676.5,465.4 A10,10 0 1 0 678.6,474.8" fill="none" stroke="#548af7" stroke-width="2.2"/><circle cx="669" cy="472" r="5" fill="none" stroke="#548af7" stroke-width="2.2"/><line x1="681" y1="458.5" x2="681" y2="474" stroke="#e06c60" stroke-width="2.2"/><polyline points="676.2,463.7 681,458.5 685.8,463.7" fill="none" stroke="#e06c60" stroke-width="2.2"/><circle cx="669" cy="736" r="10" fill="#25324d"/><path d="M676.5,729.4 A10,10 0 1 0 678.6,738.8" fill="none" stroke="#548af7" stroke-width="2.2"/><circle cx="669" cy="736" r="5" fill="none" stroke="#548af7" stroke-width="2.2"/><line x1="681" y1="722.5" x2="681" y2="738" stroke="#e06c60" stroke-width="2.2"/><polyline points="676.2,727.7 681,722.5 685.8,727.7" fill="none" stroke="#e06c60" stroke-width="2.2"/><path d="M1499,288 C1502.5,281.5 1508,278 1514,278 C1520,278 1525.5,281.5 1529,288 C1525.5,294.5 1520,298 1514,298 C1508,298 1502.5,294.5 1499,288 Z" fill="none" stroke="#6f7174" stroke-width="2.2"/><circle cx="1514" cy="288" r="5" fill="none" stroke="#6f7174" stroke-width="2"/><circle cx="1595.8" cy="288" r="12" fill="#db5c5c"/><line x1="1595.8" y1="280.5" x2="1595.8" y2="290" stroke="#1e1f22" stroke-width="3" stroke-linecap="round"/><circle cx="1595.8" cy="294.5" r="1.8" fill="#1e1f22"/><path d="M1653.5,278.5 Q1656,274.5 1658.5,278.5 L1667.5,294 Q1669.5,298 1665,298 H1647 Q1642.5,298 1644.5,294 Z" fill="#c9a55a"/><line x1="1656" y1="282" x2="1656" y2="290" stroke="#1e1f22" stroke-width="3" stroke-linecap="round"/><circle cx="1656" cy="294" r="1.7" fill="#1e1f22"/><polyline points="1701.5,285.5 1707.5,291 1721.5,278" fill="none" stroke="#5f9f63" stroke-width="3.2" stroke-linecap="round" stroke-linejoin="round"/><polyline points="1700.5,300.5 1704.5,297 1708.5,300.5 1712.5,297 1716.5,300.5 1720.5,297" fill="none" stroke="#5f9f63" stroke-width="1.8"/><polyline points="1766.75,292.0 1774,284.0 1781.25,292.0" fill="none" stroke="#ced0d6" stroke-width="2" stroke-linecap="round" stroke-linejoin="round"/><polyline points="1808.75,284.0 1816,292.0 1823.25,284.0" fill="none" stroke="#ced0d6" stroke-width="2" stroke-linecap="round" stroke-linejoin="round"/><polyline points="686,1079.5 691.5,1085.7 686,1092" fill="none" stroke="#6f737a" stroke-width="1.8"/><path d="M1585,1143 H1607 L1604,1138 V1131 A8,8.5 0 0 0 1588,1131 V1138 Z" fill="none" stroke="#dfe1e5" stroke-width="2" stroke-linejoin="round"/><path d="M1593,1146.5 H1599 A3,2.5 0 0 1 1593,1146.5 Z" fill="#dfe1e5"/></svg>
<div style="position:absolute;left:112px;top:76px;width:1728px;height:1080px;box-sizing:border-box;border:2px solid rgba(255,255,255,0.22);border-radius:22px;"></div>
<div style="position:absolute;left:912px;top:752px;width:658px;height:516px;border-radius:15px;background:#000;opacity:0.6"></div>
<div style="position:absolute;left:913px;top:753px;width:656px;height:514px;box-sizing:border-box;border:2px solid #45474c;border-radius:14px;background:#2b2d30"></div>
<div style="position:absolute;will-change:transform;left:953px;top:778.27px;white-space:pre;font-family:'Liberation Mono', monospace;font-size:26px;line-height:31px;color:#6f9df8;font-weight:normal;font-style:normal;">foo</div>
<div style="position:absolute;will-change:transform;left:953px;top:849.77px;white-space:pre;font-family:'Liberation Mono', monospace;font-size:26px;line-height:31px;color:#bcbec4;font-weight:normal;font-style:normal;"><span style="color:#cf8e6d">def</span> <span style="color:#6f9df8">ivyDeps</span>: Target[Loose.Agg[Dep]]</div>
<div style="position:absolute;left:949px;top:899px;width:584px;height:2px;background:#393b40"></div>
<div style="position:absolute;will-change:transform;left:953px;top:928.09px;white-space:pre;font-family:'Liberation Sans', sans-serif;font-size:26px;line-height:31px;color:#dfe1e5;font-weight:bold;font-style:normal;">Description copied from class:</div>
<div style="position:absolute;left:1341px;top:925px;width:164px;height:38px;border-radius:8px;background:#3e4044"></div>
<div style="position:absolute;will-change:transform;left:1351.5px;top:932.10px;white-space:pre;font-family:'Liberation Mono', monospace;font-size:24px;line-height:29px;color:#6f9df8;font-weight:normal;font-style:normal;">JavaModule</div>
<div style="position:absolute;will-change:transform;left:953px;top:984.87px;white-space:pre;font-family:'Liberation Sans', sans-serif;font-size:27.8px;line-height:33px;color:#dfe1e5;font-weight:normal;font-style:normal;">Any ivy dependencies you want to add to this</div>
<div style="position:absolute;will-change:transform;left:953px;top:1018.57px;white-space:pre;font-family:'Liberation Sans', sans-serif;font-size:27.8px;line-height:33px;color:#dfe1e5;font-weight:normal;font-style:normal;">Module, in the format ivy"org::name:version"</div>
<div style="position:absolute;will-change:transform;left:953px;top:1052.27px;white-space:pre;font-family:'Liberation Sans', sans-serif;font-size:27.8px;line-height:33px;color:#dfe1e5;font-weight:normal;font-style:normal;">for Scala dependencies or</div>
<div style="position:absolute;will-change:transform;left:953px;top:1085.97px;white-space:pre;font-family:'Liberation Sans', sans-serif;font-size:27.8px;line-height:33px;color:#dfe1e5;font-weight:normal;font-style:normal;">ivy"org:name:version" for Java dependencies</div>
<div style="position:absolute;will-change:transform;left:998px;top:1201.47px;white-space:pre;font-family:'Liberation Sans', sans-serif;font-size:27.5px;line-height:33px;color:#dfe1e5;font-weight:normal;font-style:normal;">mill-build_</div>
<svg style="position:absolute;left:0;top:0" width="1952" height="1304" viewBox="0 0 1952 1304"><path d="M959.0,1206.0 H965.2 Q966.2,1206.0 967.2,1207.0 L969.2,1210 H979.0 Q982.0,1210 982.0,1213 V1225.0 Q982.0,1228.0 979.0,1228.0 H959.0 Q956.0,1228.0 956.0,1225.0 V1209.0 Q956.0,1206.0 959.0,1206.0 Z" fill="#43454a" stroke="#ced0d6" stroke-width="2" stroke-linejoin="round"/><rect x="970" y="1218" width="16" height="16" rx="4" fill="#2b2d30"/><rect x="972" y="1220" width="12" height="12" rx="3" fill="#25324d" stroke="#548af7" stroke-width="2"/><path d="M1467.5,1228 V1222 L1484,1205.5 Q1486,1203.5 1488,1205.5 L1490.5,1208 Q1492.5,1210 1490.5,1212 L1474,1228 Z" fill="none" stroke="#dfe1e5" stroke-width="2" stroke-linejoin="round"/><line x1="1480.5" y1="1209" x2="1487" y2="1215.5" stroke="#dfe1e5" stroke-width="2"/><circle cx="1530.9" cy="1207" r="2.2" fill="#dfe1e5"/><circle cx="1530.9" cy="1217" r="2.2" fill="#dfe1e5"/><circle cx="1530.9" cy="1227" r="2.2" fill="#dfe1e5"/></svg>
</body></html>
